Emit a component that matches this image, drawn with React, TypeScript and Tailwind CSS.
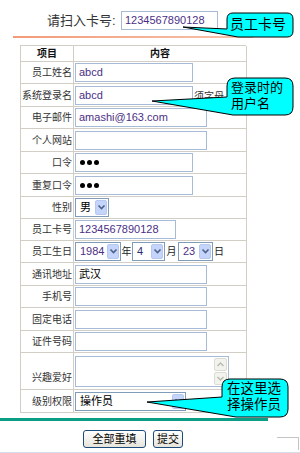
import React from "react";

type Row = {
  label: string;
  h: string;
  labelAlign?: string;
  content: React.ReactNode;
};

function Field({ className, children }: { className: string; children?: React.ReactNode }) {
  return (
    <div
      className={`h-[19px] border border-[#a7bad6] bg-white flex items-center pl-[3px] text-[11px] text-[#4b2f86] font-['Liberation_Sans','Noto_Sans_CJK_SC',sans-serif] ${className}`}
    >
      {children}
    </div>
  );
}

function Arrow() {
  return (
    <div className="w-[12px] h-[15px] rounded-[2px] bg-[#c4d4fb] border border-[#b4c8f2] flex items-center justify-center">
      <svg width="9" height="7" viewBox="0 0 9 7">
        <path d="M1.5 1.5 L4.5 4.5 L7.5 1.5" fill="none" stroke="#4d6185" strokeWidth="1.6" />
      </svg>
    </div>
  );
}

function Select({ className, value, tone }: { className: string; value: string; tone: string }) {
  return (
    <div
      className={`h-[19px] border border-[#7f9db9] bg-white flex items-center justify-between pl-[4px] pr-[1px] text-[11px] ${tone} ${className}`}
    >
      <span>{value}</span>
      <Arrow />
    </div>
  );
}

function Dots() {
  return (
    <Field className="w-[118px]">
      <div className="flex gap-[2px] pl-[1px]">
        <span className="w-[5px] h-[5px] rounded-full bg-black" />
        <span className="w-[5px] h-[5px] rounded-full bg-black" />
        <span className="w-[5px] h-[5px] rounded-full bg-black" />
      </div>
    </Field>
  );
}

function ScrollArrow({ up }: { up?: boolean }) {
  return (
    <div className="w-[13px] h-[13px] rounded-[2px] bg-[#f3f3ee] border border-[#dcdcd4] flex items-center justify-center">
      <svg width="9" height="7" viewBox="0 0 9 7">
        <path
          d={up ? "M1.5 5 L4.5 2 L7.5 5" : "M1.5 2 L4.5 5 L7.5 2"}
          fill="none"
          stroke="#b8b8b0"
          strokeWidth="1.4"
        />
      </svg>
    </div>
  );
}

const rows: Row[] = [
  { label: "员工姓名", h: "h-[23px]", content: <Field className="w-[118px]">abcd</Field> },
  {
    label: "系统登录名",
    h: "h-[23px]",
    content: (
      <div className="flex items-center">
        <Field className="w-[118px]">abcd</Field>
        <span className="ml-[1px] mt-[3px] text-[10px] text-[#333] whitespace-nowrap">须字母</span>
      </div>
    ),
  },
  { label: "电子邮件", h: "h-[22px]", content: <Field className="w-[132px]">amashi@163.com</Field> },
  { label: "个人网站", h: "h-[23px]", content: <Field className="w-[132px]" /> },
  { label: "口令", h: "h-[22px]", content: <Dots /> },
  { label: "重复口令", h: "h-[23px]", content: <Dots /> },
  {
    label: "性别",
    h: "h-[22px]",
    content: <Select className="w-[34px] h-[18px]" value="男" tone="text-black" />,
  },
  { label: "员工卡号", h: "h-[22px]", content: <Field className="w-[101px]">1234567890128</Field> },
  {
    label: "员工生日",
    h: "h-[22px]",
    content: (
      <div className="flex items-center text-[10px] text-[#222]">
        <Select className="w-[46px]" value="1984" tone="text-[#4b2f86]" />
        <span className="w-[11px] text-center">年</span>
        <Select className="w-[33px]" value="4" tone="text-[#2b2f6e]" />
        <span className="w-[13px] text-center">月</span>
        <Select className="w-[35px]" value="23" tone="text-[#4b2f86]" />
        <span className="ml-[1px]">日</span>
      </div>
    ),
  },
  {
    label: "通讯地址",
    h: "h-[23px]",
    content: <Field className="w-[132px] !items-start !text-black !text-[11px]">武汉</Field>,
  },
  { label: "手机号", h: "h-[22px]", content: <Field className="w-[132px]" /> },
  { label: "固定电话", h: "h-[23px]", content: <Field className="w-[132px]" /> },
  { label: "证件号码", h: "h-[22px]", content: <Field className="w-[132px]" /> },
  {
    label: "兴趣爱好",
    h: "h-[37px]",
    labelAlign: "items-end pb-[4px]",
    content: (
      <div className="w-[154px] h-[31px] border border-[#a7bad6] bg-white flex justify-end items-start pt-[1px] pr-[1px]">
        <div className="flex flex-col gap-[1px]">
          <ScrollArrow up />
          <ScrollArrow />
        </div>
      </div>
    ),
  },
  {
    label: "级别权限",
    h: "h-[23px]",
    content: <Select className="w-[111px]" value="操作员" tone="text-black" />,
  },
];

export default function App() {
  return (
    <div className="relative w-[300px] h-[453px] overflow-hidden bg-white font-['Liberation_Sans','Noto_Sans_CJK_SC',sans-serif]">
      <div className="flex items-center pt-[11px] pl-[47px]">
        <span className="text-[13px] leading-[19px] text-[#333] w-[74px]">请扫入卡号:</span>
        <Field className="w-[97px]">1234567890128</Field>
      </div>

      <div className="mt-[6px] ml-[13px] w-[240px] h-[2px] bg-gradient-to-r from-[#f29b78] to-[#f8c3ad]" />

      <div className="mt-[7px] ml-[20px] w-[226px] border-t border-l border-[#d2cec6]">
        <div className="grid grid-cols-[53px_173px] h-[15px]">
          <div className="border-r border-b border-[#d2cec6] flex items-center justify-center text-[10px] font-bold text-[#111]">
            项目
          </div>
          <div className="border-r border-b border-[#d2cec6] flex items-center justify-center text-[10px] font-bold text-[#111]">
            内容
          </div>
        </div>
        {rows.map((r) => (
          <div key={r.label} className={`grid grid-cols-[53px_173px] ${r.h}`}>
            <div
              className={`border-r border-b border-[#d2cec6] flex justify-end pr-[1px] text-[10px] text-[#333] whitespace-nowrap ${
                r.labelAlign ?? "items-center"
              }`}
            >
              {r.label}
            </div>
            <div className="border-r border-b border-[#d2cec6] flex items-center pl-[1px]">{r.content}</div>
          </div>
        ))}
      </div>

      <div className="mt-[5px] w-[268px] h-[3px] bg-[#0a9f84]" />

      <div className="flex items-start mt-[9px]">
        <div className="flex gap-[7px] pl-[83px]">
          <button className="w-[63px] h-[18px] rounded-[3px] border border-[#1c4b7c] bg-gradient-to-b from-white to-[#e6e4da] text-[11px] text-black flex items-center justify-center">
            全部重填
          </button>
          <button className="w-[30px] h-[18px] rounded-[3px] border border-[#1c4b7c] bg-gradient-to-b from-white to-[#e6e4da] text-[11px] text-black flex items-center justify-center">
            提交
          </button>
        </div>
        <div className="ml-auto mt-[7px] mr-[1px] w-[22px] h-[13px] border-t border-r border-[#c4c4c4]" />
      </div>
      <div className="mt-[2px] h-[2px] bg-[#d3dae8]" />

      <svg className="absolute inset-0 pointer-events-none" width="300" height="453" viewBox="0 0 300 453">
        <path
          d="M233 13 H287 Q293 13 293 19 V31 Q293 37 287 37 H238 L183 27 L227 29 V19 Q227 13 233 13 Z"
          fill="#00ffff"
          stroke="#000"
          strokeWidth="1"
        />
        <path
          d="M235 78 H285 Q293 78 293 86 V107 Q293 115 285 115 H233 L152 101 L227 97 V86 Q227 78 235 78 Z"
          fill="#00ffff"
          stroke="#000"
          strokeWidth="1"
        />
        <path
          d="M230 379 H280 Q288 379 288 387 V409 Q288 417 280 417 H236 L147 402 L222 397 V387 Q222 379 230 379 Z"
          fill="#00ffff"
          stroke="#000"
          strokeWidth="1"
        />
      </svg>

      <div className="absolute left-[230px] top-[15px] text-[14px] leading-[18px] text-black">员工卡号</div>
      <div className="absolute left-[231px] top-[80px] flex flex-col text-[13px] leading-[15px] text-black">
        <span>登录时的</span>
        <span className="mt-[1px]">用户名</span>
      </div>
      <div className="absolute left-[227px] top-[381px] flex flex-col text-[13.5px] leading-[16px] text-black">
        <span>在这里选</span>
        <span>择操作员</span>
      </div>
    </div>
  );
}
